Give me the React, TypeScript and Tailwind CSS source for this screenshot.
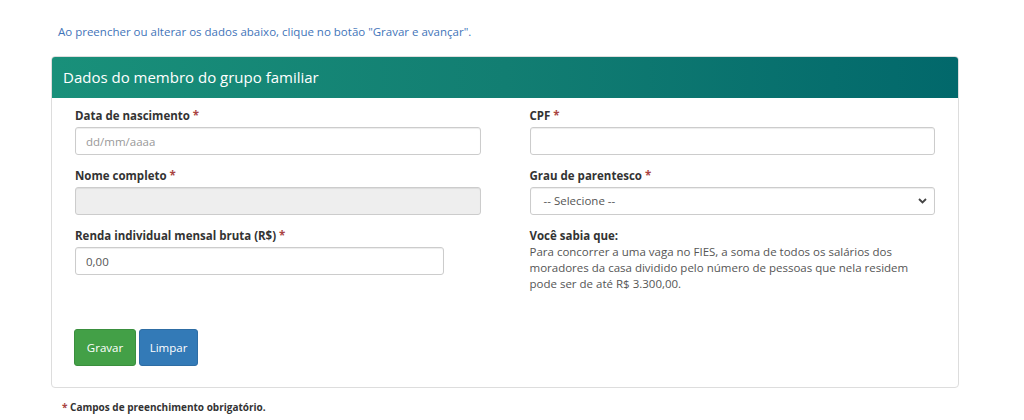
import React from "react";

const Req = () => <span className="text-[#a94442]">*</span>;

function Label({ children }: { children: React.ReactNode }) {
  return (
    <label className="block text-[11.5px] leading-[17px] font-bold text-[#333] mb-[3px]">
      {children}
    </label>
  );
}

const inputCls =
  "block w-full h-[28px] px-[10px] text-[11.5px] text-[#555] bg-white border border-[#ccc] rounded-[3px] shadow-[inset_0_1px_1px_rgba(0,0,0,0.075)] outline-none placeholder:text-[#999]";

export default function App() {
  return (
    <div className="w-[1024px] h-[420px] bg-white overflow-hidden" style={{ fontFamily: '"Open Sans", "Liberation Sans", sans-serif' }}>
      <div className="pl-[51px] pr-[65px] pt-[23px]">
        <p className="pl-[7px] text-[11.5px] leading-[17px] text-[#3f74b9]">
          Ao preencher ou alterar os dados abaixo, clique no botão "Gravar e avançar".
        </p>
        <div className="mt-[16px] border border-[#ddd] rounded-[4px] overflow-hidden">
          <div className="h-[41px] flex items-center px-[11px] text-white text-[15px] bg-gradient-to-r from-[#19907a] via-[#127e72] to-[#02686b]">
            Dados do membro do grupo familiar
          </div>
          <div className="px-[23px] pt-[9px] pb-[21px]">
            <div className="grid grid-cols-2 gap-x-[49px]">
              <div>
                <Label>Data de nascimento <Req /></Label>
                <input className={inputCls} placeholder="dd/mm/aaaa" />
                <div className="mt-[12px]">
                  <Label>Nome completo <Req /></Label>
                  <input className={inputCls + " !bg-[#eee]"} disabled />
                </div>
                <div className="mt-[12px]">
                  <Label>Renda individual mensal bruta (R$) <Req /></Label>
                  <input className={inputCls + " !w-[369px]"} defaultValue="0,00" />
                </div>
              </div>
              <div>
                <Label>CPF <Req /></Label>
                <input className={inputCls} />
                <div className="mt-[12px]">
                  <Label>Grau de parentesco <Req /></Label>
                  <div className="relative">
                    <div className={inputCls + " flex items-center !px-[13px]"}>-- Selecione --</div>
                    <svg className="absolute right-[8px] top-[11px]" width="9" height="6" viewBox="0 0 9 6">
                      <path d="M1 1l3.5 3.5L8 1" fill="none" stroke="#444" strokeWidth="1.8" />
                    </svg>
                  </div>
                </div>
                <div className="mt-[12px] text-[11.5px] leading-[16px] text-[#555]">
                  <div className="font-bold text-[#333] leading-[17px]">Você sabia que:</div>
                  <p>
                    Para concorrer a uma vaga no FIES, a soma de todos os salários dos moradores da casa dividido pelo número de pessoas que nela residem pode ser de até R$ 3.300,00.
                  </p>
                </div>
              </div>
            </div>
            <div className="flex gap-[3px] mt-[37px] -ml-[1px]">
              <button className="h-[37px] w-[62px] rounded-[3px] bg-[#43a047] border border-[#3a8f3e] text-white text-[11.5px]">Gravar</button>
              <button className="h-[37px] w-[59px] rounded-[3px] bg-[#337ab7] border border-[#2e6da4] text-white text-[11.5px]">Limpar</button>
            </div>
          </div>
        </div>
        <p className="mt-[12px] pl-[11px] text-[10px] leading-[14px] font-bold text-[#333]">
          <Req /> Campos de preenchimento obrigatório.
        </p>
      </div>
    </div>
  );
}
